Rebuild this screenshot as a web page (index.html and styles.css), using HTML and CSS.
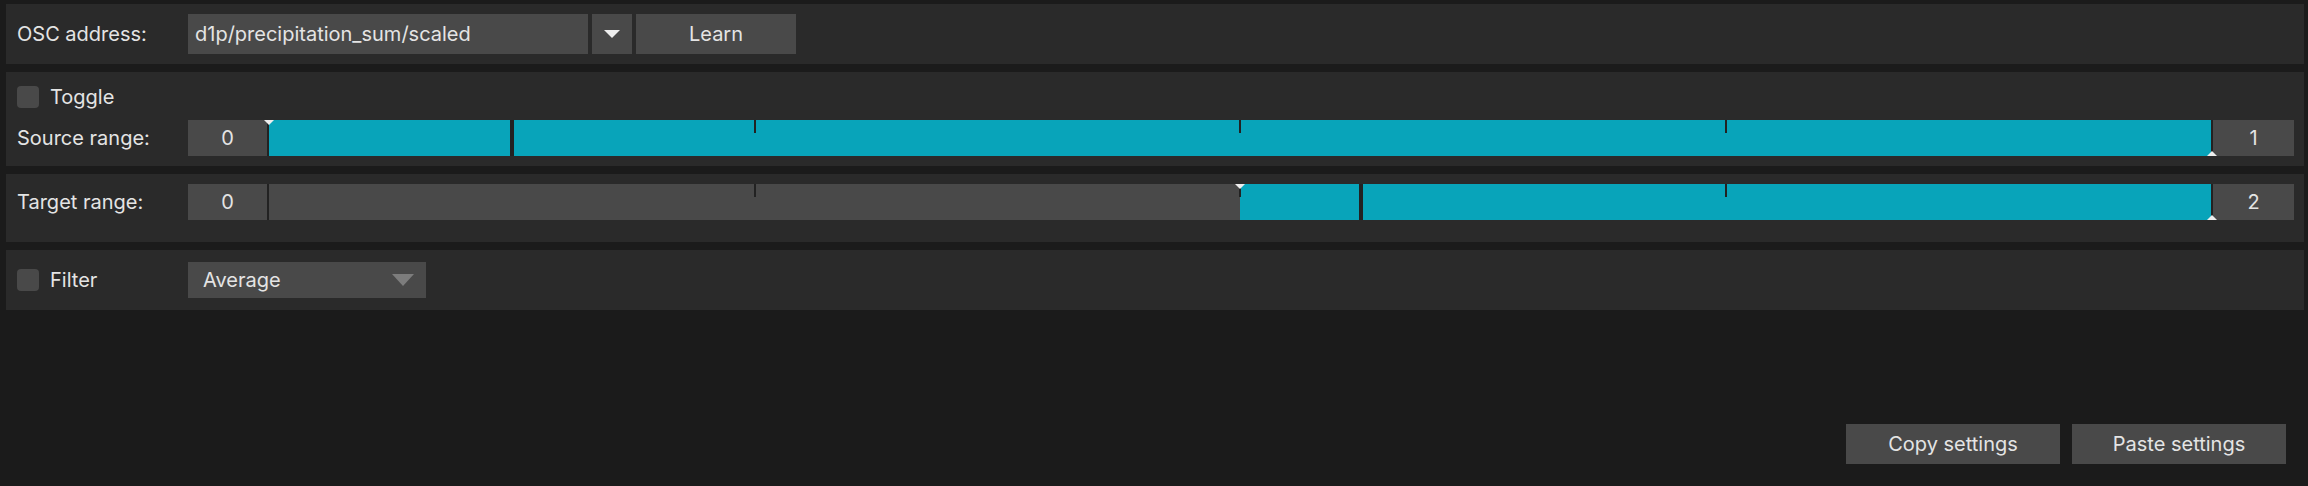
FILE: index.html
```html
<!DOCTYPE html>
<html>
<head>
<meta charset="utf-8">
<link rel="stylesheet" href="styles.css">
</head>
<body>
<div class="app">
  <section class="panel panel-osc">
    <div class="row">
      <span class="label">OSC address:</span>
      <div class="field">d1p/precipitation_sum/scaled</div>
      <div class="btn btn-drop"><span class="tri-down"></span></div>
      <div class="btn btn-learn">Learn</div>
    </div>
  </section>

  <section class="panel panel-source">
    <div class="check-row">
      <span class="checkbox"></span>
      <span class="check-label">Toggle</span>
    </div>
    <div class="row range-row">
      <span class="label">Source range:</span>
      <div class="numbox">0</div>
      <div class="slider">
        <div class="track">
          <div class="fill" style="left:0%;width:100%"></div>
          <div class="tick" style="left:25%"></div>
          <div class="tick" style="left:50%"></div>
          <div class="tick" style="left:75%"></div>
          <div class="marker" style="left:12.5%"></div>
          <div class="thumb-top" style="left:0%"></div>
          <div class="thumb-bottom" style="left:100%"></div>
        </div>
      </div>
      <div class="numbox">1</div>
    </div>
  </section>

  <section class="panel panel-target">
    <div class="row range-row">
      <span class="label">Target range:</span>
      <div class="numbox">0</div>
      <div class="slider">
        <div class="track">
          <div class="fill" style="left:50%;width:50%"></div>
          <div class="tick" style="left:25%"></div>
          <div class="tick" style="left:50%"></div>
          <div class="tick" style="left:75%"></div>
          <div class="marker" style="left:56.25%"></div>
          <div class="thumb-top" style="left:50%"></div>
          <div class="thumb-bottom" style="left:100%"></div>
        </div>
      </div>
      <div class="numbox">2</div>
    </div>
  </section>

  <section class="panel panel-filter">
    <div class="row">
      <div class="check-inline">
        <span class="checkbox"></span>
        <span class="check-label">Filter</span>
      </div>
      <div class="combo">
        <span>Average</span>
        <span class="tri-combo"></span>
      </div>
    </div>
  </section>

  <footer class="actions">
    <div class="btn btn-action">Copy settings</div>
    <div class="btn btn-action">Paste settings</div>
  </footer>
</div>
</body>
</html>
```

FILE: styles.css
```css
* { box-sizing: border-box; }
html, body {
  margin: 0;
  padding: 0;
  background: #1b1b1b;
  height: 100%;
}
body {
  font-family: "Inter", "Liberation Sans", sans-serif;
  font-size: 20px;
  color: #e4e4e4;
}
.app {
  height: 486px;
  padding: 4px 4px 22px 6px;
  display: flex;
  flex-direction: column;
  gap: 8px;
}
.panel {
  background: #2a2a2a;
  padding: 10px 10px 10px 11px;
}
.panel-osc { height: 60px; }
.panel-source { height: 94px; padding-top: 10px; }
.panel-target { height: 68px; }
.panel-filter { height: 60px; padding-top: 12px; }

.row {
  display: flex;
  align-items: center;
  height: 40px;
}
.label {
  width: 171px;
  flex: none;
  line-height: 1;
}
.field {
  width: 400px;
  height: 40px;
  background: #494949;
  padding-left: 7px;
  display: flex;
  align-items: center;
}
.btn {
  background: #494949;
  height: 40px;
  display: flex;
  align-items: center;
  justify-content: center;
}
.btn-drop {
  width: 40px;
  margin-left: 4px;
}
.tri-down {
  width: 0; height: 0;
  border-left: 8.5px solid transparent;
  border-right: 8.5px solid transparent;
  border-top: 8px solid #eeeeee;
}
.btn-learn {
  width: 160px;
  margin-left: 4px;
}

.check-row {
  display: flex;
  align-items: center;
  height: 26px;
  margin-top: 2px;
}
.checkbox {
  width: 22px;
  height: 22px;
  background: #494949;
  border-radius: 4px;
  flex: none;
}
.check-label {
  margin-left: 11px;
  line-height: 1;
}
.range-row {
  height: 36px;
  margin-top: 10px;
}
.panel-target .range-row { margin-top: 0; }
.numbox {
  width: 79px;
  height: 36px;
  background: #494949;
  display: flex;
  align-items: center;
  justify-content: center;
  flex: none;
}
.numbox:last-child { width: 81px; }
.slider {
  flex: 1;
  height: 36px;
  background: #222222;
  padding: 0 2px;
}
.track {
  position: relative;
  height: 100%;
  background: #494949;
}
.fill {
  position: absolute;
  top: 0;
  bottom: 0;
  background: #08a4ba;
}
.tick {
  position: absolute;
  top: 0;
  width: 2px;
  height: 13px;
  margin-left: -1px;
  background: #222222;
}
.marker {
  position: absolute;
  top: 0;
  bottom: 0;
  width: 4px;
  margin-left: -2px;
  background: #222222;
}
.thumb-top {
  position: absolute;
  top: 0;
  width: 0; height: 0;
  margin-left: -5px;
  border-left: 5px solid transparent;
  border-right: 5px solid transparent;
  border-top: 5px solid #eeeeee;
}
.thumb-bottom {
  position: absolute;
  bottom: 0;
  width: 0; height: 0;
  margin-left: -4px;
  border-left: 5px solid transparent;
  border-right: 5px solid transparent;
  border-bottom: 5px solid #eeeeee;
}

.check-inline {
  width: 171px;
  display: flex;
  align-items: center;
  flex: none;
}
.combo {
  width: 238px;
  height: 36px;
  background: #494949;
  display: flex;
  align-items: center;
  justify-content: space-between;
  padding: 0 12px 0 15px;
}
.tri-combo {
  width: 0; height: 0;
  border-left: 11.5px solid transparent;
  border-right: 11.5px solid transparent;
  border-top: 12px solid #7d7d7d;
}
.panel-filter .row { height: 36px; }

.actions {
  margin-top: auto;
  display: flex;
  justify-content: flex-end;
  gap: 12px;
  padding-right: 18px;
}
.btn-action {
  width: 214px;
  height: 40px;
}
```
